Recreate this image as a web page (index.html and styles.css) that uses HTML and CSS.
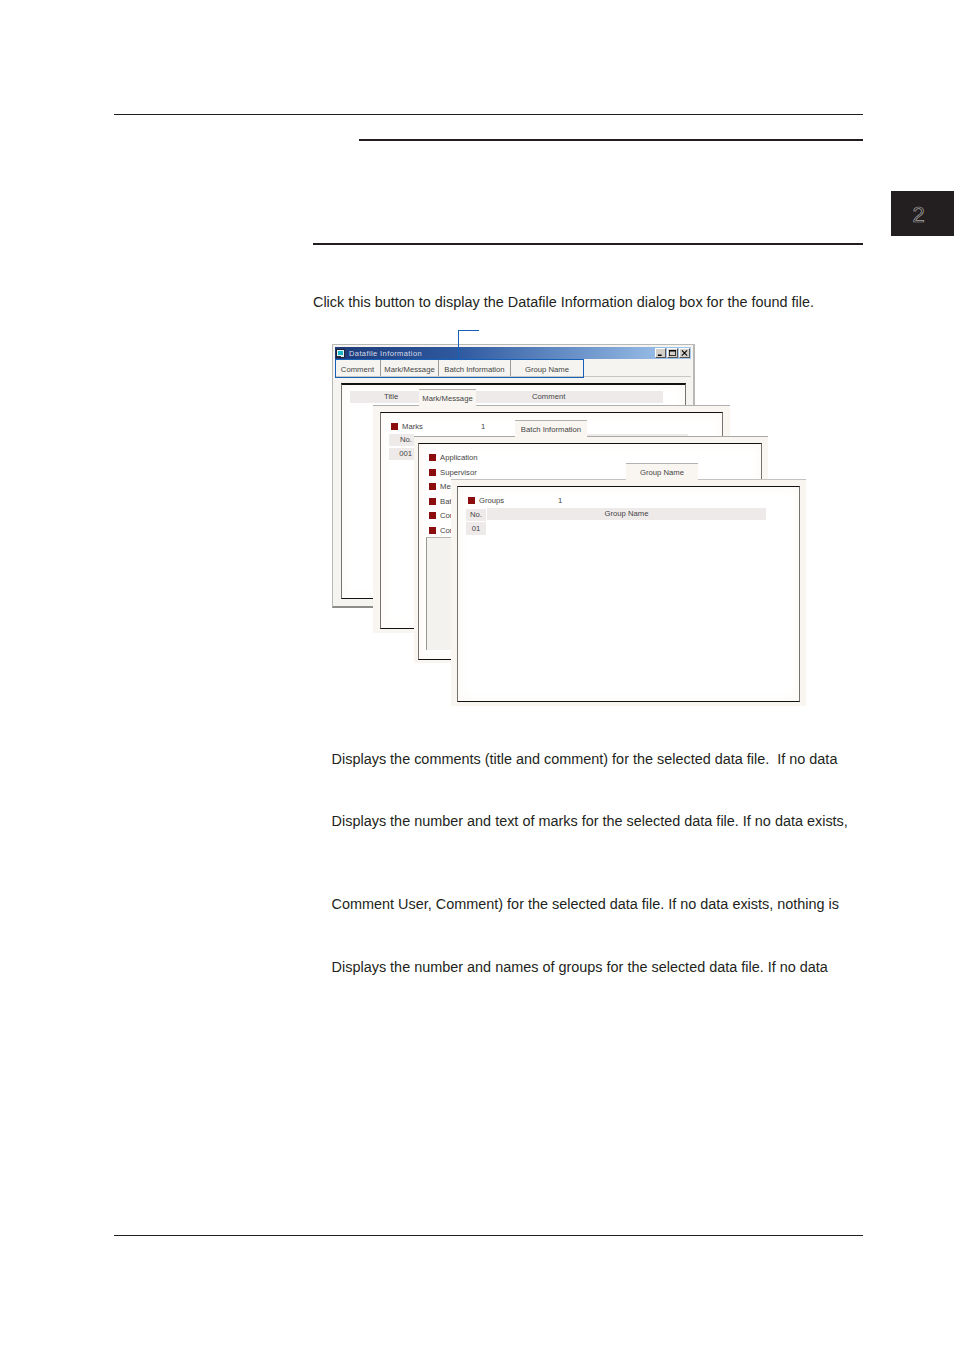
FILE: index.html
```html
<!DOCTYPE html>
<html lang="en">
<head>
<meta charset="utf-8">
<title>Datafile Information</title>
<link rel="stylesheet" href="styles.css">
</head>
<body>
<div class="page">
  <div class="side-tab"><span class="side-num">2</span></div>
  <hr class="rule-top">
  <hr class="rule-sub">
  <hr class="rule-sec">
  <p class="intro">Click this button to display the Datafile Information dialog box for the found file.</p>

  <div class="figure">
    <div class="leader"></div>
    <div class="callout"></div>

    <div class="win win1">
      <div class="titlebar">
        <svg class="app-icon" width="9" height="9" viewBox="0 0 9 9"><rect x="0.5" y="0.5" width="8" height="8" fill="#e8f4f4" stroke="#223"/><rect x="2" y="2" width="5" height="4" fill="#19b6c9"/><rect x="1" y="7" width="4" height="1" fill="#234"/></svg>
        <span class="title-text">Datafile Information</span>
        <span class="ctl-group">
          <span class="ctl"><svg width="9" height="8" viewBox="0 0 9 8"><rect x="1" y="6" width="5" height="2" fill="#000"/></svg></span>
          <span class="ctl"><svg width="9" height="8" viewBox="0 0 9 8"><rect x="0.5" y="0.5" width="8" height="7" fill="none" stroke="#000"/><rect x="0" y="0" width="9" height="2" fill="#000"/></svg></span>
          <span class="ctl"><svg width="9" height="8" viewBox="0 0 9 8"><path d="M1 0.5 L8 7.5 M8 0.5 L1 7.5" stroke="#000" stroke-width="1.4"/></svg></span>
        </span>
      </div>
      <div class="tabstrip">
        <span class="strip-tab st1">Comment</span>
        <span class="strip-tab st2">Mark/Message</span>
        <span class="strip-tab st3">Batch Information</span>
        <span class="strip-tab st4">Group Name</span>
      </div>
      <div class="panel p1">
        <div class="thead th1"><span class="c-title">Title</span><span class="c-comment">Comment</span></div>
      </div>
    </div>

    <div class="win win2">
      <div class="wtab tab2">Mark/Message</div>
      <div class="panel p2">
        <div class="field f-marks"><i class="sq"></i><span>Marks</span><b class="val">1</b></div>
        <div class="cell c-no2">No.</div>
        <div class="cell c-001">001</div>
        <div class="thead th2"></div>
      </div>
    </div>

    <div class="win win3">
      <div class="wtab tab3">Batch Information</div>
      <div class="panel p3">
        <div class="fields3">
          <div class="field"><i class="sq"></i><span>Application</span></div>
          <div class="field"><i class="sq"></i><span>Supervisor</span></div>
          <div class="field"><i class="sq"></i><span>Mer</span></div>
          <div class="field"><i class="sq"></i><span>Bat</span></div>
          <div class="field"><i class="sq"></i><span>Cor</span></div>
          <div class="field"><i class="sq"></i><span>Cor</span></div>
        </div>
        <div class="memo"></div>
      </div>
    </div>

    <div class="win win4">
      <div class="wtab tab4">Group Name</div>
      <div class="panel p4">
        <div class="field f-groups"><i class="sq"></i><span>Groups</span><b class="val val4">1</b></div>
        <div class="cell c-no4">No.</div>
        <div class="thead th4">Group Name</div>
        <div class="cell c-01">01</div>
      </div>
    </div>
  </div>

  <p class="desc d1">Displays the comments (title and comment) for the selected data file.&nbsp; If no data</p>
  <p class="desc d2">Displays the number and text of marks for the selected data file. If no data exists,</p>
  <p class="desc d3">Comment User, Comment) for the selected data file. If no data exists, nothing is</p>
  <p class="desc d4">Displays the number and names of groups for the selected data file. If no data</p>

  <hr class="rule-bottom">
</div>
</body>
</html>
```
FILE: styles.css
```css
* { box-sizing: border-box; }
html, body { margin: 0; padding: 0; background: #fff; }
body { font-family: "Liberation Sans", Arial, sans-serif; color: #231f20; }
.page { position: relative; width: 954px; height: 1350px; padding-top: 114px; overflow: hidden; }

hr { border: 0; margin: 0; background: #231f20; }
.rule-top { height: 1px; margin-left: 114px; width: 749px; }
.rule-sub { height: 2px; margin: 24px 0 0 359px; width: 504px; }
.rule-sec { height: 2px; margin: 102px 0 0 313px; width: 550px; }
.rule-bottom { height: 1px; margin: 259px 0 0 114px; width: 749px; }

.side-tab { position: absolute; left: 891px; top: 191px; width: 63px; height: 45px; background: #231f20; display: flex; align-items: center; justify-content: center; padding-right: 8px; padding-top: 3px; }
.side-num { font-size: 22px; line-height: 1; color: transparent; -webkit-text-stroke: 0.7px #a5a3a3; }

.intro { margin: 49px 0 0 313px; font-size: 14.43px; line-height: 17px; white-space: nowrap; }

.figure { position: relative; margin: 19px 0 0 332px; width: 480px; height: 378px; font-size: 7.7px; color: #444; }

.leader { position: absolute; left: 126px; top: 0; width: 21px; height: 30px; border-left: 1px solid #1560b8; border-top: 1px solid #1560b8; z-index: 5; }
.callout { position: absolute; left: 3px; top: 29px; width: 249px; height: 19px; border: 1px solid #1560b8; z-index: 5; }

.win { position: absolute; background: #f9f6f2; }
.win1 { left: 0; top: 14px; width: 363px; height: 264px; background: #f6f4f0; border: 1px solid #b8b8b6; border-right-width: 2px; border-bottom: 2px solid #8c8c88; padding: 2px; z-index: 1; }
.win2 { left: 41px; top: 75px; width: 357px; height: 228px; border-top: 1px solid #b0b0ae; z-index: 2; }
.win3 { left: 82px; top: 106px; width: 354px; height: 227px; border-top: 1px solid #a8a8a6; z-index: 3; }
.win4 { left: 119px; top: 149px; width: 355px; height: 227px; border-top: 1px solid #c4c2c0; z-index: 4; }

.titlebar { display: flex; align-items: center; height: 12px; background: linear-gradient(90deg, #1d3a78 0%, #2f5aa0 35%, #a6caf0 100%); padding: 0 1px; color: #d8dde8; }
.app-icon { flex: none; }
.title-text { margin-left: 4px; font-size: 7.5px; letter-spacing: 0.4px; }
.ctl-group { margin-left: auto; display: flex; gap: 1px; }
.ctl { width: 11px; height: 10px; background: #d4d0c8; border: 1px solid; border-color: #fff #555 #555 #fff; display: flex; align-items: center; justify-content: center; overflow: hidden; }
.ctl svg { width: 7px; height: 6px; }

.tabstrip { display: flex; height: 18px; border-bottom: 1px solid #c8c6c2; }
.strip-tab { display: flex; align-items: center; justify-content: center; border-right: 1px solid #9c9a96; height: 17px; padding-top: 3px; }
.st1 { width: 46px; }
.st2 { width: 58px; }
.st3 { width: 72px; }
.st4 { width: 72px; border-right: 0; }

.panel { position: absolute; background: #fff; border: 1px solid; border-color: #111 #77736e #111 #77736e; box-shadow: inset 0 0 8px 4px #fdfbf8; }
.p1 { left: 8px; top: 38px; width: 345px; height: 216px; border-top-width: 2px; border-bottom-width: 1px; }
.p2 { left: 7px; top: 6px; width: 343px; height: 217px; }
.p3 { left: 4px; top: 6px; width: 344px; height: 217px; }
.p4 { left: 6px; top: 6px; width: 343px; height: 216px; }

.thead { position: absolute; background: #efeaea; height: 12px; line-height: 12px; text-align: center; }
.th1 { left: 8px; top: 6px; width: 313px; }
.c-title { position: absolute; left: 34px; }
.c-comment { position: absolute; left: 182px; }
.th2 { left: 137px; top: 21px; width: 170px; height: 2px; }
.th4 { left: 29px; top: 21px; width: 279px; }

.wtab { position: absolute; height: 17px; line-height: 17px; text-align: center; background: #f9f6f2; border-top: 1px solid #b4b2b0; white-space: nowrap; z-index: 2; }
.tab2 { left: 46px; top: -17px; width: 57px; }
.tab3 { left: 101px; top: -17px; width: 72px; }
.tab4 { left: 175px; top: -17px; width: 72px; }

.field { display: flex; align-items: center; height: 10px; white-space: nowrap; }
.sq { display: block; width: 7px; height: 7px; background: #8b0d0d; margin-right: 4px; flex: none; }
.val { font-weight: 400; }
.f-marks { position: absolute; left: 10px; top: 8.5px; width: 100px; }
.f-marks .val { position: absolute; left: 90px; }
.f-groups { position: absolute; left: 10px; top: 8px; width: 100px; }
.val4 { position: absolute; left: 90px; }

.cell { position: absolute; background: #efeaea; height: 12px; line-height: 12px; text-align: center; }
.c-no2 { left: 8px; top: 21px; width: 25px; text-align: right; padding-right: 2px; }
.c-001 { left: 8px; top: 35px; width: 25px; text-align: right; padding-right: 2px; }
.c-no4 { left: 8px; top: 22px; width: 20px; }
.c-01 { left: 8px; top: 35px; width: 20px; height: 13px; line-height: 14px; }

.fields3 { position: absolute; left: 10px; top: 8.5px; display: flex; flex-direction: column; gap: 4.5px; }
.memo { position: absolute; left: 7px; top: 93px; width: 90px; height: 113px; background: #f4f2ef; border-left: 1px solid #9a9894; border-top: 1px solid #b8b6b2; }

.desc { margin: 0 0 0 331.6px; font-size: 14.43px; line-height: 17px; white-space: nowrap; }
.d1 { margin-top: 43px; }
.d2 { margin-top: 45px; }
.d3 { margin-top: 66px; }
.d4 { margin-top: 46px; }
```
